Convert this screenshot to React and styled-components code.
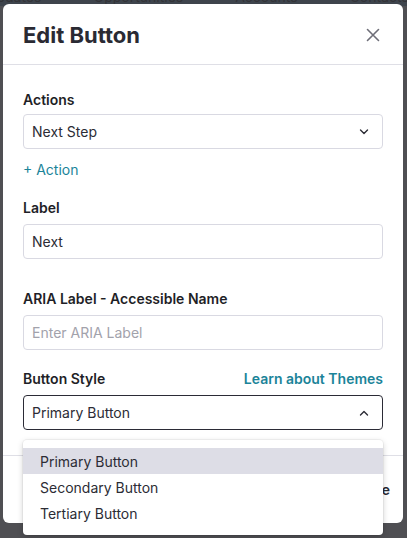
import { useState } from "react";
import styled, { createGlobalStyle } from "styled-components";

const GlobalStyle = createGlobalStyle`
  html, body {
    margin: 0;
    padding: 0;
    background: #4b4b50;
    font-family: Inter, "Noto Sans", "Liberation Sans", sans-serif;
    -webkit-font-smoothing: antialiased;
  }
  * { box-sizing: border-box; }
`;

const Page = styled.div`
  position: relative;
  width: 407px;
  height: 538px;
  overflow: hidden;
  background: #5a5a5f;
`;

const Nav = styled.div`
  display: flex;
  gap: 52px;
  margin-top: -12px;
  height: 18px;
  font-size: 14px;
  color: #2e2e33;
  border-bottom: 6px solid #3f4953;
  white-space: nowrap;
`;

const Overlay = styled.div`
  position: absolute;
  inset: 0;
  background: rgba(60, 60, 64, 0.35);
  padding: 4px 4px 0 3px;
`;

const Modal = styled.div`
  width: 400px;
  height: 519px;
  background: #fff;
  border-radius: 6px;
  display: flex;
  flex-direction: column;
`;

const Header = styled.div`
  height: 61px;
  display: flex;
  align-items: center;
  justify-content: space-between;
  padding: 1px 23px 0 20px;
  border-bottom: 1px solid #dfdfe6;
`;

const Title = styled.h2`
  margin: 0;
  font-size: 22px;
  font-weight: 700;
  color: #2a2a33;
`;

const CloseButton = styled.button`
  border: none;
  background: none;
  padding: 0;
  width: 24px;
  height: 24px;
  display: flex;
  align-items: center;
  justify-content: center;
  cursor: pointer;
  margin-right: -5px;
`;

const Body = styled.div`
  padding: 24px 20px 0 20px;
  flex: 1;
`;

const LabelRow = styled.div`
  display: flex;
  justify-content: space-between;
  align-items: center;
  margin-top: ${(p) => p.top || 0}px;
  margin-bottom: ${(p) => (p.tight ? 5 : 7)}px;
  height: 20px;
`;

const Label = styled.label`
  font-size: 14px;
  font-weight: 600;
  color: #1f1f27;
`;

const ThemeLink = styled.a`
  font-size: 14px;
  font-weight: 600;
  color: #1b8499;
  text-decoration: none;
`;

const AddLink = styled.a`
  display: block;
  margin-top: 11px;
  line-height: 20px;
  font-size: 14px;
  color: #1b8499;
  text-decoration: none;
`;

const Control = styled.div`
  position: relative;
  height: 35px;
  border: 1px solid ${(p) => (p.active ? "#2b2b36" : "#d9d9e2")};
  border-radius: 4px;
  display: flex;
  align-items: center;
  justify-content: space-between;
  padding: 0 13px 0 8px;
  font-size: 14px;
  color: ${(p) => (p.placeholder ? "#a2a2ab" : "#2c2c35")};
  background: #fff;
`;

const Menu = styled.ul`
  position: absolute;
  left: -1px;
  right: -1px;
  top: calc(100% + 11px);
  margin: 0;
  padding: 8px 0 9px;
  list-style: none;
  background: #fff;
  border-radius: 4px;
  box-shadow: 0 2px 6px rgba(0, 0, 0, 0.18), 0 0 0 1px rgba(0, 0, 0, 0.04);
  z-index: 5;
`;

const MenuItem = styled.li`
  height: 26px;
  display: flex;
  align-items: center;
  padding-left: 17px;
  font-size: 14px;
  color: #2c2c35;
  background: ${(p) => (p.selected ? "#dddde6" : "transparent")};
`;

const Footer = styled.div`
  height: 68px;
  border-top: 1px solid #dfdfe6;
  display: flex;
  align-items: center;
  justify-content: flex-end;
  gap: 24px;
  padding: 0 13px 0 20px;
`;

const FooterButton = styled.button`
  border: none;
  background: none;
  font-family: inherit;
  font-size: 14px;
  font-weight: 600;
  color: #2a2a33;
  padding: 0;
`;

const Chevron = ({ up }) => (
  <svg width="10" height="6" viewBox="0 0 10 6" fill="none">
    <path
      d={up ? "M1.5 5L5 1.5L8.5 5" : "M1.5 1L5 4.5L8.5 1"}
      stroke="#2c2c35"
      strokeWidth="1.4"
      strokeLinecap="round"
      strokeLinejoin="round"
    />
  </svg>
);

const styles = ["Primary Button", "Secondary Button", "Tertiary Button"];

export default function App() {
  const [style] = useState("Primary Button");

  return (
    <Page>
      <GlobalStyle />
      <Nav aria-hidden="true">
        <span style={{ marginLeft: -14 }}>Updates</span>
        <span>Opportunities</span>
        <span>Accounts</span>
        <span>Contacts</span>
      </Nav>
      <Overlay>
        <Modal>
          <Header>
            <Title>Edit Button</Title>
            <CloseButton aria-label="Close">
              <svg width="14" height="14" viewBox="0 0 14 14">
                <path
                  d="M1.5 1.5L12.5 12.5M12.5 1.5L1.5 12.5"
                  stroke="#6e6e78"
                  strokeWidth="1.6"
                  strokeLinecap="round"
                />
              </svg>
            </CloseButton>
          </Header>
          <Body>
            <LabelRow tight>
              <Label>Actions</Label>
            </LabelRow>
            <Control>
              Next Step
              <Chevron />
            </Control>
            <AddLink>+ Action</AddLink>

            <LabelRow top={17}>
              <Label>Label</Label>
            </LabelRow>
            <Control>Next</Control>

            <LabelRow top={29}>
              <Label>ARIA Label - Accessible Name</Label>
            </LabelRow>
            <Control placeholder>Enter ARIA Label</Control>

            <LabelRow top={18}>
              <Label>Button Style</Label>
              <ThemeLink>Learn about Themes</ThemeLink>
            </LabelRow>
            <Control active>
              {style}
              <Chevron up />
              <Menu>
                {styles.map((s) => (
                  <MenuItem key={s} selected={s === style}>
                    {s}
                  </MenuItem>
                ))}
              </Menu>
            </Control>
          </Body>
          <Footer>
            <FooterButton>Cancel</FooterButton>
            <FooterButton>Save</FooterButton>
          </Footer>
        </Modal>
      </Overlay>
    </Page>
  );
}
